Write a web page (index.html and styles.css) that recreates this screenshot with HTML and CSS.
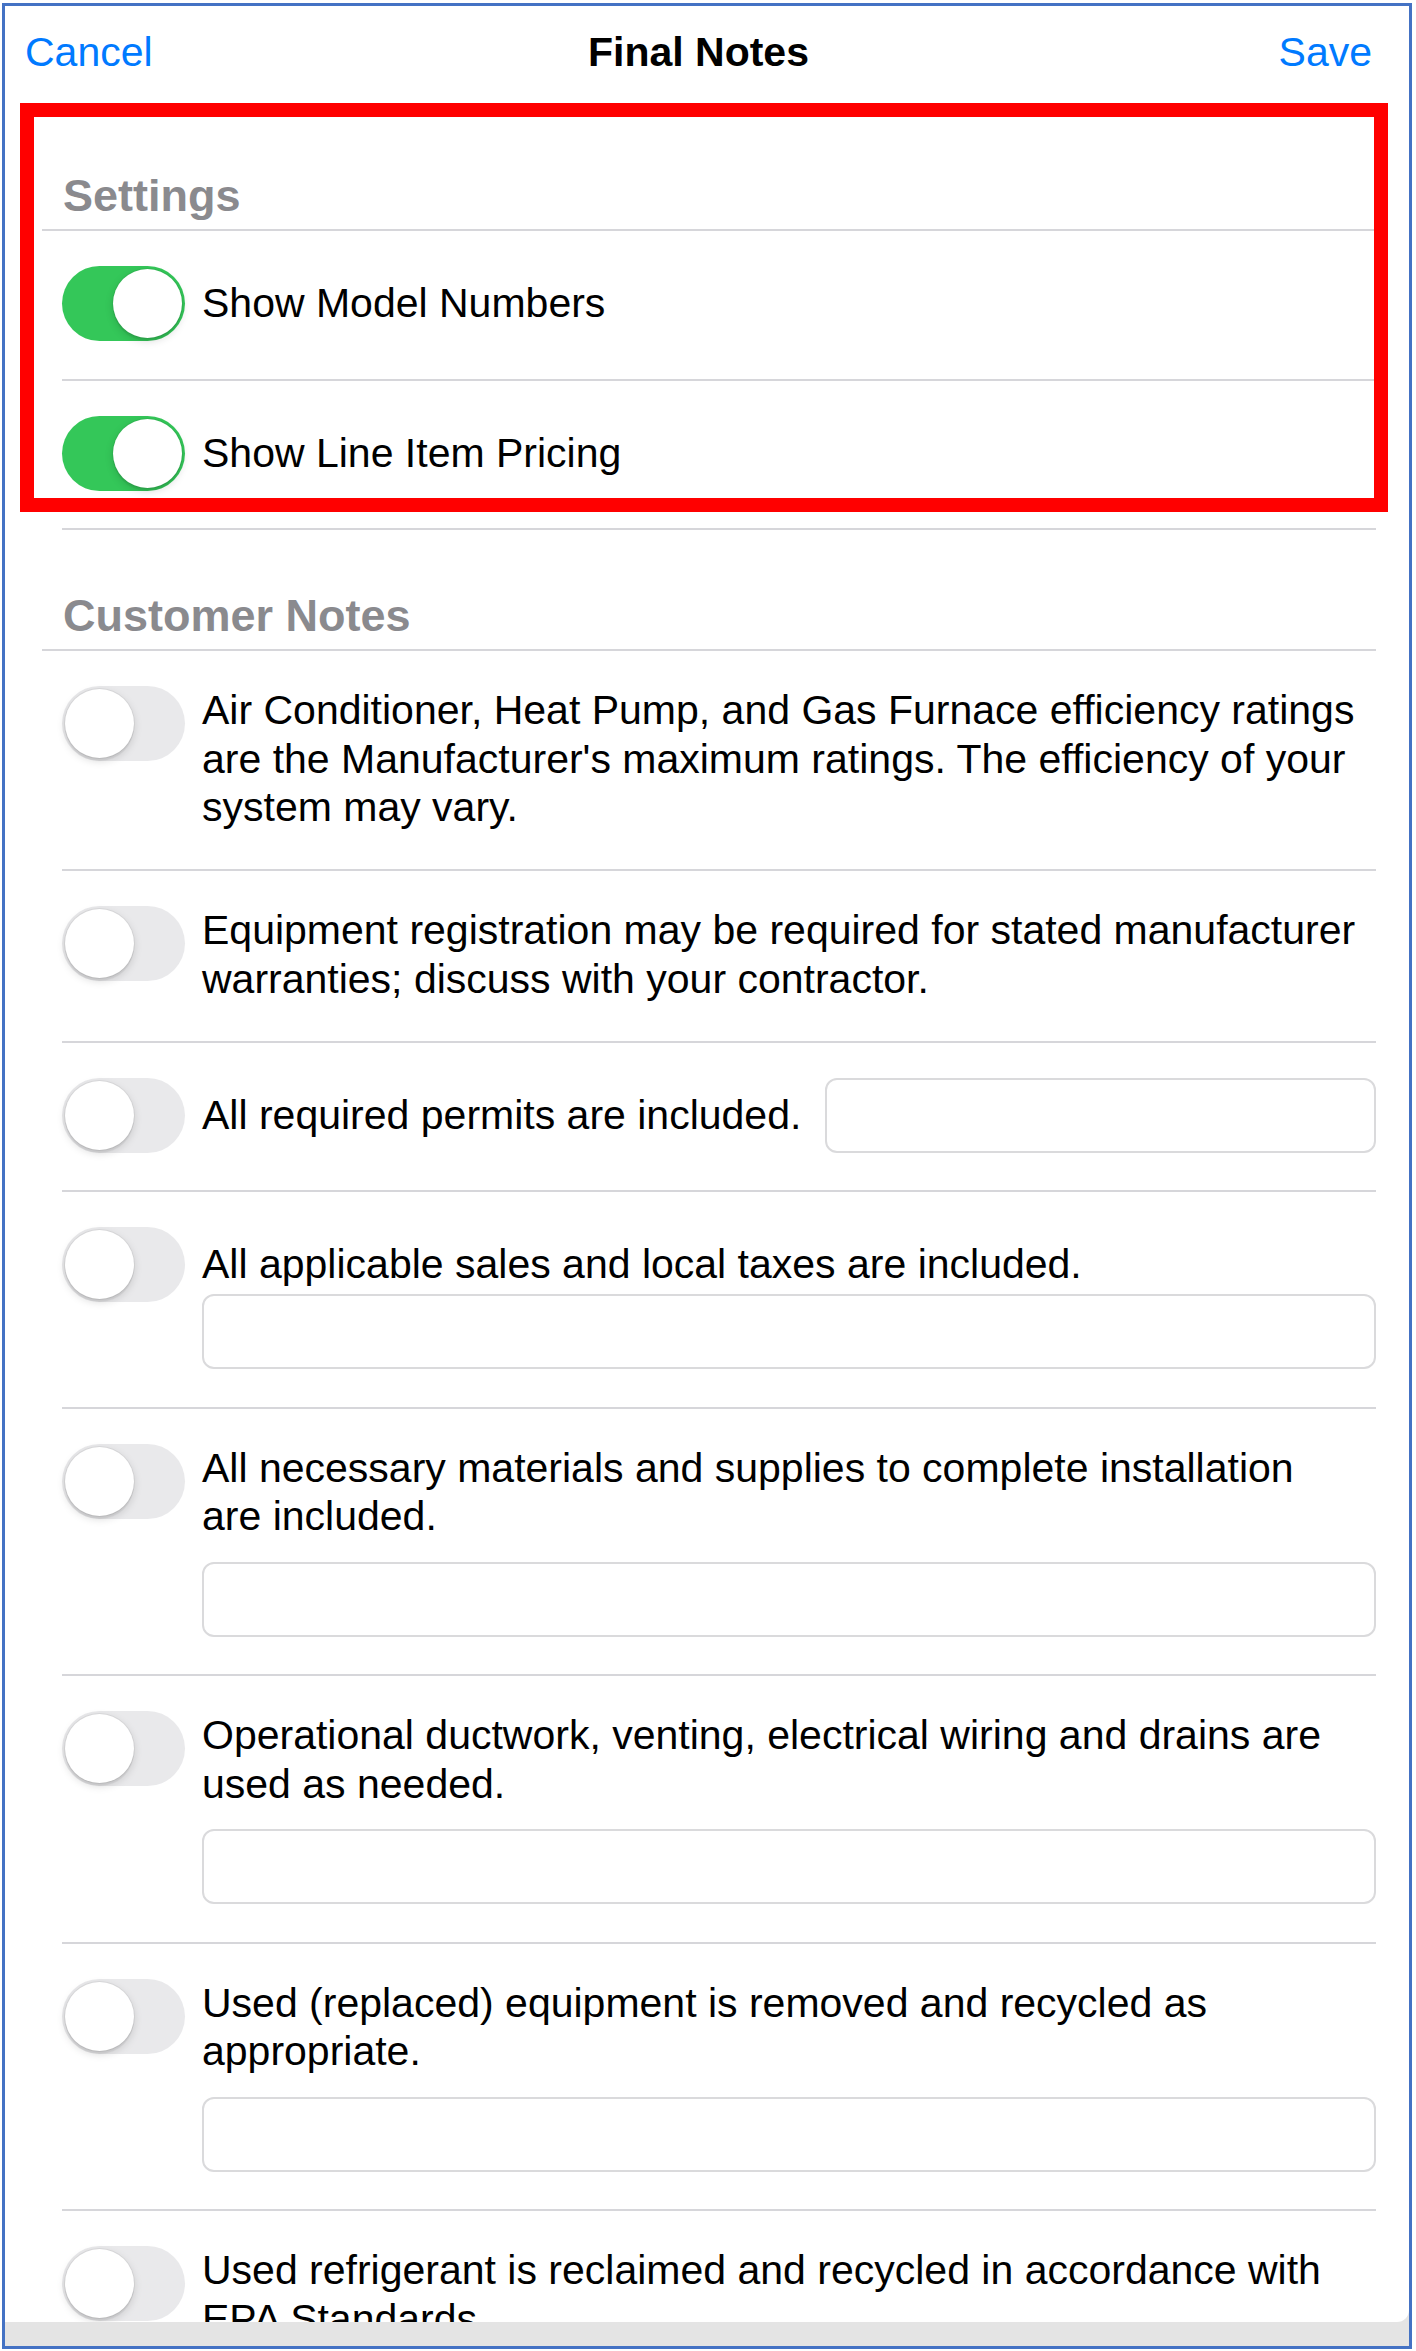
FILE: index.html
```html
<!DOCTYPE html>
<html lang="en">
<head>
<meta charset="utf-8">
<title>Final Notes</title>
<link rel="stylesheet" href="styles.css">
</head>
<body>
<div class="frame">
  <div class="sheet">
    <header class="navbar">
      <span class="nav-btn nav-left">Cancel</span>
      <span class="nav-title">Final Notes</span>
      <span class="nav-btn nav-right">Save</span>
    </header>

    <section class="group">
      <h2 class="group-title">Settings</h2>
      <div class="row">
        <span class="switch on"></span>
        <div class="body"><div class="label">Show Model Numbers</div></div>
      </div>
      <div class="row">
        <span class="switch on"></span>
        <div class="body"><div class="label">Show Line Item Pricing</div></div>
      </div>
    </section>

    <section class="group">
      <h2 class="group-title">Customer Notes</h2>
      <div class="row">
        <span class="switch"></span>
        <div class="body"><div class="label">Air Conditioner, Heat Pump, and Gas Furnace efficiency ratings<br>are the Manufacturer's maximum ratings. The efficiency of your<br>system may vary.</div></div>
      </div>
      <div class="row">
        <span class="switch"></span>
        <div class="body"><div class="label">Equipment registration may be required for stated manufacturer<br>warranties; discuss with your contractor.</div></div>
      </div>
      <div class="row">
        <span class="switch"></span>
        <div class="body body-inline">
          <div class="label">All required permits are included.</div>
          <div class="field field-inline"></div>
        </div>
      </div>
      <div class="row one">
        <span class="switch"></span>
        <div class="body">
          <div class="label">All applicable sales and local taxes are included.</div>
          <div class="field"></div>
        </div>
      </div>
      <div class="row">
        <span class="switch"></span>
        <div class="body">
          <div class="label">All necessary materials and supplies to complete installation<br>are included.</div>
          <div class="field"></div>
        </div>
      </div>
      <div class="row">
        <span class="switch"></span>
        <div class="body">
          <div class="label">Operational ductwork, venting, electrical wiring and drains are<br>used as needed.</div>
          <div class="field"></div>
        </div>
      </div>
      <div class="row">
        <span class="switch"></span>
        <div class="body">
          <div class="label">Used (replaced) equipment is removed and recycled as<br>appropriate.</div>
          <div class="field"></div>
        </div>
      </div>
      <div class="row">
        <span class="switch"></span>
        <div class="body">
          <div class="label">Used refrigerant is reclaimed and recycled in accordance with<br>EPA Standards.</div>
          <div class="field"></div>
        </div>
      </div>
    </section>
  </div>
  <div class="footer-bar"></div>
  <div class="highlight"></div>
</div>
</body>
</html>
```

FILE: styles.css
```css
html, body {
  margin: 0;
  padding: 0;
  background: #ffffff;
}

body {
  font-family: "Liberation Sans", Arial, sans-serif;
  color: #000000;
  overflow: hidden;
}

.frame {
  position: relative;
  box-sizing: border-box;
  width: 1410px;
  height: 2346px;
  margin: 3px 0 0 2px;
  border: 3px solid #4472c4;
  background: #e4e4e4;
  display: flex;
  flex-direction: column;
}

.sheet {
  flex: 1;
  min-height: 0;
  overflow: hidden;
  background: #ffffff;
  border-bottom-right-radius: 12px;
}

.footer-bar {
  flex: none;
  height: 24px;
  background: #e4e4e4;
}

.navbar {
  box-sizing: border-box;
  height: 104px;
  padding: 0 37px 12px 20px;
  display: grid;
  grid-template-columns: 1fr auto 1fr;
  align-items: center;
  font-size: 41px;
}

.nav-btn {
  color: #007aff;
}

.nav-left {
  justify-self: start;
}

.nav-right {
  justify-self: end;
}

.nav-title {
  font-weight: 700;
}

.group {
  margin: 0 33px 0 37px;
}

.group-title {
  margin: 0;
  padding: 61px 0 8px 21px;
  font-size: 45px;
  line-height: 50px;
  font-weight: 700;
  color: #8a8a8e;
  border-bottom: 2px solid #d6d6da;
}

.row {
  display: flex;
  align-items: flex-start;
  gap: 17px;
  margin-left: 20px;
  padding: 35px 0 37.5px;
  border-bottom: 2px solid #d6d6da;
}

.switch {
  position: relative;
  flex: none;
  width: 123px;
  height: 75px;
  border-radius: 38px;
  background: #e9e9eb;
}

.switch::after {
  content: "";
  position: absolute;
  top: 3px;
  left: 3px;
  width: 69px;
  height: 69px;
  border-radius: 50%;
  background: #ffffff;
  box-shadow: 0 3px 8px rgba(0, 0, 0, 0.15), 0 3px 1px rgba(0, 0, 0, 0.06), 0 0 0 1px rgba(0, 0, 0, 0.05);
}

.switch.on {
  background: #34c759;
}

.switch.on::after {
  left: 51px;
}

.body {
  flex: 1;
  min-width: 0;
}

.body-inline {
  display: flex;
  align-items: flex-start;
  gap: 24px;
}

.label {
  min-height: 75px;
  display: flex;
  align-items: center;
  font-size: 41px;
  line-height: 48.5px;
  white-space: nowrap;
}

.field {
  box-sizing: border-box;
  height: 75px;
  margin-top: 21px;
  border: 2px solid #dadadc;
  border-radius: 12px;
  background: #ffffff;
}

.row.one .field {
  margin-top: -8px;
}

.field-inline {
  flex: 1;
  margin-top: 0;
}

.highlight {
  position: absolute;
  left: 15px;
  top: 97px;
  width: 1368px;
  height: 409px;
  box-sizing: border-box;
  border: 14px solid #ff0000;
  pointer-events: none;
}
```
